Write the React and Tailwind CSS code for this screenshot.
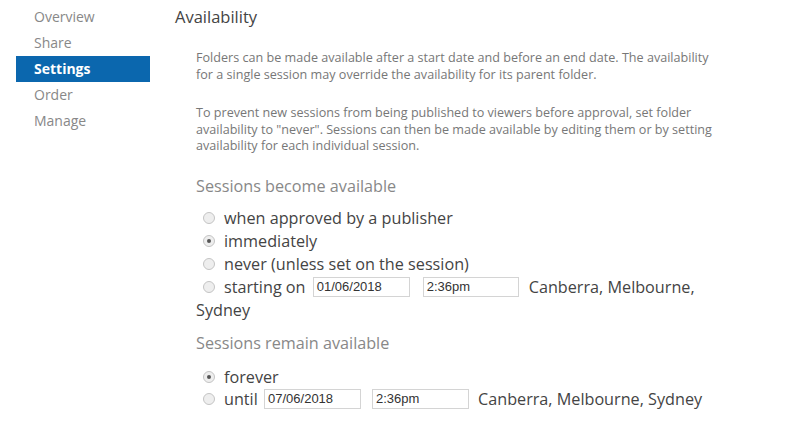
import React from "react";

const font = { fontFamily: '"Open Sans", "Noto Sans", sans-serif' };

function Radio({ checked }) {
  return (
    <span className="inline-block align-middle relative w-[12px] h-[12px] rounded-full border border-[#c4c4c4] bg-[#eeeeee] mr-[9px] -mt-[3px]">
      {checked && (
        <span className="absolute left-[3px] top-[3px] w-[4px] h-[4px] rounded-full bg-[#555]" />
      )}
    </span>
  );
}

function Box({ value, w }) {
  return (
    <span
      className={`inline-block align-middle h-[20px] border border-[#d4d4d4] bg-white pl-[3px] text-[13px] leading-[18px] text-[#333] -mt-[2px] ${w}`}
      style={{ fontFamily: '"Liberation Sans", Arial, sans-serif' }}
    >
      {value}
    </span>
  );
}

export default function App() {
  const nav = ["Overview", "Share", "Settings", "Order", "Manage"];
  return (
    <div className="flex w-[788px] h-[423px] bg-white overflow-hidden" style={font}>
      <div className="w-[150px] pl-[16px] pt-[4px] shrink-0">
        {nav.map((n) =>
          n === "Settings" ? (
            <div key={n} className="h-[26px] leading-[26px] pl-[18px] bg-[#0b67ae] text-white font-bold text-[14px]">
              {n}
            </div>
          ) : (
            <div key={n} className="h-[26px] leading-[26px] pl-[18px] text-[#888] text-[14px]">
              {n}
            </div>
          )
        )}
      </div>
      <div className="pl-[25px] pt-[4px]">
        <div className="h-[26px] leading-[26px] text-[16.5px] text-[#444]">Availability</div>
        <div className="pl-[21px] mt-[20px] text-[12.6px] leading-[16.5px] text-[#777] whitespace-nowrap">
          <p>
            Folders can be made available after a start date and before an end date. The availability
            <br />
            for a single session may override the availability for its parent folder.
          </p>
          <p className="mt-[22px]">
            To prevent new sessions from being published to viewers before approval, set folder
            <br />
            availability to "never". Sessions can then be made available by editing them or by setting
            <br />
            availability for each individual session.
          </p>
        </div>
        <div className="pl-[21px] w-[580px] whitespace-nowrap">
          <div className="mt-[20px] text-[16.2px] leading-[22px] text-[#888]">Sessions become available</div>
          <div className="mt-[10px] text-[16.2px] leading-[23px] text-[#444]">
            <div className="pl-[7px]"><Radio />when approved by a publisher</div>
            <div className="pl-[7px]"><Radio checked />immediately</div>
            <div className="pl-[7px]"><Radio />never (unless set on the session)</div>
            <div className="pl-[7px] leading-[23.5px]">
              <Radio />starting on <span className="ml-[3px]"><Box value="01/06/2018" w="w-[97px]" /></span>
              <span className="ml-[13px]"><Box value="2:36pm" w="w-[96px]" /></span>
              <span className="ml-[10px]">Canberra, Melbourne,</span>
              <br />
              <span className="-ml-[7px]">Sydney</span>
            </div>
          </div>
          <div className="mt-[9px] text-[16.2px] leading-[22px] text-[#888]">Sessions remain available</div>
          <div className="mt-[12px] text-[16.2px] leading-[22px] text-[#444]">
            <div className="pl-[7px]"><Radio checked />forever</div>
            <div className="pl-[7px]">
              <Radio />until <span className="ml-[2px]"><Box value="07/06/2018" w="w-[97px]" /></span>
              <span className="ml-[11px]"><Box value="2:36pm" w="w-[97px]" /></span>
              <span className="ml-[9px]">Canberra, Melbourne, Sydney</span>
            </div>
          </div>
        </div>
      </div>
    </div>
  );
}
